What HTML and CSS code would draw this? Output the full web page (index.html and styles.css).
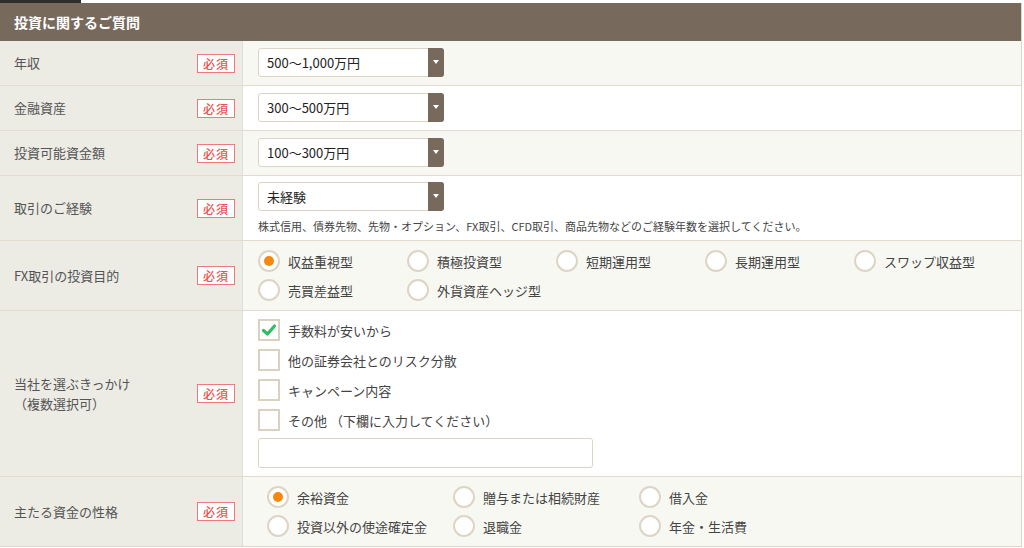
FILE: index.html
```html
<!DOCTYPE html>
<html lang="ja">
<head>
<meta charset="utf-8">
<link rel="stylesheet" href="styles.css">
</head>
<body>
<div class="topbar"><div class="topbar-dark"></div></div>
<div class="panel">
  <div class="panel-head">投資に関するご質問</div>

  <div class="row alt">
    <div class="label"><span>年収</span><span class="req">必須</span></div>
    <div class="field">
      <div class="select"><span>500〜1,000万円</span><i class="arrow"></i></div>
    </div>
  </div>

  <div class="row">
    <div class="label"><span>金融資産</span><span class="req">必須</span></div>
    <div class="field">
      <div class="select"><span>300〜500万円</span><i class="arrow"></i></div>
    </div>
  </div>

  <div class="row alt">
    <div class="label"><span>投資可能資金額</span><span class="req">必須</span></div>
    <div class="field">
      <div class="select"><span>100〜300万円</span><i class="arrow"></i></div>
    </div>
  </div>

  <div class="row">
    <div class="label"><span>取引のご経験</span><span class="req">必須</span></div>
    <div class="field field-exp">
      <div class="select"><span>未経験</span><i class="arrow"></i></div>
      <p class="note">株式信用、債券先物、先物・オプション、FX取引、CFD取引、商品先物などのご経験年数を選択してください。</p>
    </div>
  </div>

  <div class="row alt">
    <div class="label"><span>FX取引の投資目的</span><span class="req">必須</span></div>
    <div class="field field-radios">
      <div class="radio-grid five">
        <label class="radio on"><i></i>収益重視型</label>
        <label class="radio"><i></i>積極投資型</label>
        <label class="radio"><i></i>短期運用型</label>
        <label class="radio"><i></i>長期運用型</label>
        <label class="radio"><i></i>スワップ収益型</label>
        <label class="radio"><i></i>売買差益型</label>
        <label class="radio"><i></i>外貨資産ヘッジ型</label>
      </div>
    </div>
  </div>

  <div class="row">
    <div class="label"><span>当社を選ぶきっかけ<br>（複数選択可）</span><span class="req">必須</span></div>
    <div class="field field-checks">
      <label class="check on"><i><svg viewBox="0 0 16 16" width="16" height="16"><path d="M2.5 8.5 L6.5 12 L13.5 4" fill="none" stroke="#2fbf63" stroke-width="3.2" stroke-linecap="round" stroke-linejoin="round"/></svg></i>手数料が安いから</label>
      <label class="check"><i></i>他の証券会社とのリスク分散</label>
      <label class="check"><i></i>キャンペーン内容</label>
      <label class="check"><i></i>その他 （下欄に入力してください）</label>
      <div class="textbox"></div>
    </div>
  </div>

  <div class="row alt last">
    <div class="label"><span>主たる資金の性格</span><span class="req">必須</span></div>
    <div class="field field-radios field-funds">
      <div class="radio-grid three">
        <label class="radio on"><i></i>余裕資金</label>
        <label class="radio"><i></i>贈与または相続財産</label>
        <label class="radio"><i></i>借入金</label>
        <label class="radio"><i></i>投資以外の使途確定金</label>
        <label class="radio"><i></i>退職金</label>
        <label class="radio"><i></i>年金・生活費</label>
      </div>
    </div>
  </div>
</div>
</body>
</html>
```

FILE: styles.css
```css
* { box-sizing: border-box; }
html, body { margin: 0; padding: 0; background: #fff; }
body {
  font-family: "Noto Sans CJK JP", "Noto Sans", sans-serif;
  color: #333;
  width: 1024px;
  height: 548px;
  overflow: hidden;
}
.topbar { height: 3px; background: #fff; }
.topbar-dark { width: 81px; height: 3px; background: #2f2d2b; }

.panel {
  width: 1022px;
  border-right: 1px solid #ddd7ca;
}
.panel-head {
  height: 38px;
  background: #776a5d;
  color: #fff;
  font-size: 14px;
  font-weight: bold;
  line-height: 38px;
  padding-left: 14px;
}

.row {
  display: flex;
  background: #fff;
  border-bottom: 1px solid #e2dccf;
}
.row.alt { background: #f8f8f3; }
.row.last { border-bottom: 1px solid #ddd6c8; }

.label {
  flex: 0 0 243px;
  background: #ecebe4;
  border-right: 1px solid #e2ddd2;
  display: flex;
  align-items: center;
  justify-content: space-between;
  padding: 0 7px 0 14px;
  font-size: 13px;
  color: #555;
  line-height: 20px;
}
.req {
  display: inline-block;
  width: 38px;
  height: 19px;
  border: 1px solid #f07a7a;
  background: #fff;
  color: #e9524f;
  font-size: 12px;
  font-weight: 500;
  line-height: 17px;
  text-align: center;
  letter-spacing: 1px;
}

.field {
  flex: 1;
  padding: 7px 15px 8px 15px;
}
.select {
  position: relative;
  width: 186px;
  height: 29px;
  border: 1px solid #dcd5c6;
  border-radius: 3px;
  background: #fff;
  font-size: 13px;
  line-height: 27px;
  padding-left: 8px;
  color: #222;
}
.arrow {
  position: absolute;
  right: -1px;
  top: -1px;
  width: 16px;
  height: 29px;
  background: #77695b;
  border-radius: 0 3px 3px 0;
}
.arrow::after {
  content: "";
  position: absolute;
  left: 5px;
  top: 12px;
  border-left: 3px solid transparent;
  border-right: 3px solid transparent;
  border-top: 4px solid #fff;
}

.field-exp { padding: 6px 15px 6px 15px; }
.note {
  margin: 7px 0 0 0;
  font-size: 11px;
  color: #444;
  line-height: 16px;
}

.field-radios { padding: 9px 15px 9px 15px; }
.radio-grid { display: grid; row-gap: 7px; }
.radio-grid.five { grid-template-columns: repeat(5, 149px); }
.radio-grid.three { grid-template-columns: repeat(3, 186px); }
.field-funds { padding-left: 24px; }

.radio {
  display: flex;
  align-items: center;
  height: 22px;
  font-size: 13px;
  color: #444;
}
.radio i {
  flex: 0 0 auto;
  width: 22px;
  height: 22px;
  border: 2px solid #ddd5c4;
  border-radius: 50%;
  background: #fff;
  margin-right: 8px;
  position: relative;
}
.radio.on i::after {
  content: "";
  position: absolute;
  left: 4px;
  top: 4px;
  width: 10px;
  height: 10px;
  border-radius: 50%;
  background: #f7870f;
}

.field-checks {
  display: flex;
  flex-direction: column;
  padding: 8px 15px 8px 15px;
}
.check {
  display: flex;
  align-items: center;
  height: 22px;
  margin-bottom: 8px;
  font-size: 13px;
  color: #444;
}
.check i {
  flex: 0 0 auto;
  width: 22px;
  height: 22px;
  border: 2px solid #d9d2c1;
  background: #fff;
  margin-right: 8px;
  display: flex;
  align-items: center;
  justify-content: center;
}
.textbox {
  margin-top: -1px;
  width: 335px;
  height: 30px;
  border: 1px solid #dcd5c6;
  border-radius: 3px;
  background: #fff;
}
```
